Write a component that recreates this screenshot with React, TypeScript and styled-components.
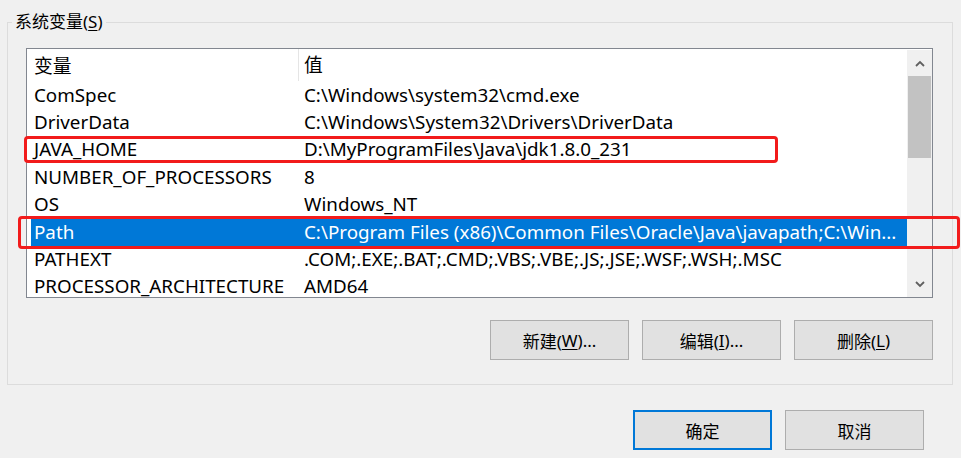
import React from "react";
import styled, { createGlobalStyle } from "styled-components";

const GlobalStyle = createGlobalStyle`
  html, body {
    margin: 0;
    padding: 0;
    background: #f0f0f0;
  }
  body {
    font-family: "Noto Sans", "Noto Sans CJK SC", sans-serif;
    font-size: 18.8px;
    color: #000;
  }
`;

const Page = styled.div`
  position: relative;
  width: 961px;
  height: 458px;
  overflow: hidden;
  box-sizing: border-box;
  padding-top: 11px;
`;

const Group = styled.fieldset`
  margin: 0 0 0 7px;
  width: 946px;
  box-sizing: border-box;
  border: 1px solid #dcdcdc;
  padding: 0 19px 24px 18px;
  display: flex;
  flex-direction: column;
`;

const Legend = styled.legend`
  padding: 0 3px;
  margin-left: -14px;
  font-size: 17px;
  line-height: 22px;
  color: #000;
`;

const Mnemonic = styled.span`
  text-decoration: underline;
  text-underline-offset: 2px;
`;

const ListBox = styled.div`
  margin-top: 15px;
  height: 250px;
  box-sizing: border-box;
  border: 1px solid #828790;
  background: #fff;
  display: flex;
  overflow: hidden;
`;

const ListBody = styled.div`
  flex: 1;
  overflow: hidden;
  display: flex;
  flex-direction: column;
`;

const HeaderRow = styled.div`
  height: 32.5px;
  flex: none;
  display: grid;
  grid-template-columns: 271px 1fr;
  align-items: center;
`;

const HeaderCell = styled.div<{ $divider?: boolean }>`
  height: 100%;
  display: flex;
  align-items: center;
  padding-left: ${(p) => (p.$divider ? "5px" : "7px")};
  border-left: ${(p) => (p.$divider ? "1px solid #e5e5e5" : "none")};
  box-sizing: border-box;
  margin: ${(p) => (p.$divider ? "1px 0 3px" : "0")};
`;

const Row = styled.div<{ $selected?: boolean }>`
  height: 27.4px;
  flex: none;
  margin-left: 4px;
  display: grid;
  grid-template-columns: 267px 1fr;
  align-items: center;
  background: ${(p) => (p.$selected ? "#0078d7" : "transparent")};
  color: ${(p) => (p.$selected ? "#fff" : "#000")};
  white-space: nowrap;
  line-height: 19px;
`;

const Cell = styled.div`
  padding-left: 3px;
`;

const ValueCell = styled.div`
  padding-left: 6px;
`;

const ScrollBar = styled.div`
  width: 25px;
  flex: none;
  margin-top: 1px;
  background: #f0f0f0;
  display: flex;
  flex-direction: column;
`;

const ArrowButton = styled.div`
  height: 26px;
  flex: none;
  display: flex;
  align-items: center;
  justify-content: center;
`;

const Thumb = styled.div`
  height: 82px;
  margin: 0 1px;
  background: #c2c2c2;
  flex: none;
`;

const Track = styled.div`
  flex: 1;
`;

const ButtonRow = styled.div<{ $gap: number }>`
  display: flex;
  justify-content: flex-end;
  gap: ${(p) => p.$gap}px;
`;

const ListButtons = styled(ButtonRow)`
  margin-top: 22px;
`;

const DialogButtons = styled(ButtonRow)`
  margin-top: 25px;
  padding-right: 37px;
`;

const Button = styled.button<{ $default?: boolean }>`
  width: 139px;
  height: 40px;
  box-sizing: border-box;
  background: #e1e1e1;
  border: ${(p) => (p.$default ? "2px solid #0078d7" : "1px solid #adadad")};
  font-family: "Noto Sans", "Noto Sans CJK SC", sans-serif;
  font-size: 17px;
  color: #000;
  padding: 0;
  display: flex;
  align-items: center;
  justify-content: center;
`;

const Callout = styled.div`
  position: absolute;
  border: 3px solid #f21b1b;
  border-radius: 4px;
  box-sizing: border-box;
  pointer-events: none;
`;

const Chevron = ({ up }: { up?: boolean }) => (
  <svg width="10" height="7" viewBox="0 0 10 7">
    <path
      d={up ? "M1 6 L5 2 L9 6" : "M1 1 L5 5 L9 1"}
      fill="none"
      stroke="#606060"
      strokeWidth="1.8"
    />
  </svg>
);

const rows = [
  ["ComSpec", "C:\\Windows\\system32\\cmd.exe"],
  ["DriverData", "C:\\Windows\\System32\\Drivers\\DriverData"],
  ["JAVA_HOME", "D:\\MyProgramFiles\\Java\\jdk1.8.0_231"],
  ["NUMBER_OF_PROCESSORS", "8"],
  ["OS", "Windows_NT"],
  ["Path", "C:\\Program Files (x86)\\Common Files\\Oracle\\Java\\javapath;C:\\Win..."],
  ["PATHEXT", ".COM;.EXE;.BAT;.CMD;.VBS;.VBE;.JS;.JSE;.WSF;.WSH;.MSC"],
  ["PROCESSOR_ARCHITECTURE", "AMD64"],
];

export default function App() {
  return (
    <Page>
      <GlobalStyle />
      <Group>
        <Legend>
          系统变量(<Mnemonic>S</Mnemonic>)
        </Legend>
        <ListBox>
          <ListBody>
            <HeaderRow>
              <HeaderCell>变量</HeaderCell>
              <HeaderCell $divider>值</HeaderCell>
            </HeaderRow>
            {rows.map(([name, value]) => (
              <Row key={name} $selected={name === "Path"}>
                <Cell>{name}</Cell>
                <ValueCell>{value}</ValueCell>
              </Row>
            ))}
          </ListBody>
          <ScrollBar>
            <ArrowButton>
              <Chevron up />
            </ArrowButton>
            <Thumb />
            <Track />
            <ArrowButton>
              <Chevron />
            </ArrowButton>
          </ScrollBar>
        </ListBox>
        <ListButtons $gap={13}>
          <Button>
            新建(<Mnemonic>W</Mnemonic>)...
          </Button>
          <Button>
            编辑(<Mnemonic>I</Mnemonic>)...
          </Button>
          <Button>
            删除(<Mnemonic>L</Mnemonic>)
          </Button>
        </ListButtons>
      </Group>
      <DialogButtons $gap={13}>
        <Button $default>确定</Button>
        <Button>取消</Button>
      </DialogButtons>
      <Callout style={{ left: 24, top: 136, width: 754, height: 27 }} />
      <Callout style={{ left: 18, top: 216, width: 942, height: 33 }} />
    </Page>
  );
}
